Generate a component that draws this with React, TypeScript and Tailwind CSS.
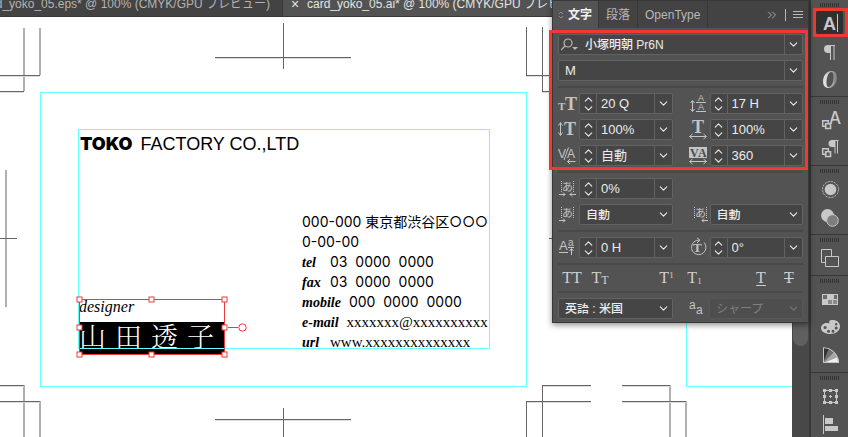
import { useState, type ReactNode } from 'react';
import { ChevronDown, ChevronUp, ChevronsRight, Menu } from 'lucide-react';

const SANS = "font-['Liberation_Sans','Noto_Sans_CJK_JP',sans-serif]";
const FIELD = 'h-[21px] rounded-xs border border-[#626262] bg-[#454545] text-[#ececec]';

/* ---------- character panel glyphs ---------- */

function Glyph({ children }: { children: ReactNode }) {
  return (
    <svg width="21" height="21" viewBox="0 0 21 21" fill="#c4c4c4" stroke="none" className="shrink-0">
      {children}
    </svg>
  );
}

function T({ x, y, size, children, serif = true, bold = true, fill }: any) {
  return (
    <text
      x={x}
      y={y}
      fontSize={size}
      fill={fill}
      fontWeight={bold ? 700 : 400}
      fontFamily={serif ? 'Liberation Serif, serif' : 'Liberation Sans, Noto Sans CJK JP, sans-serif'}
    >
      {children}
    </text>
  );
}

function Line({ d }: { d: string }) {
  return <path d={d} fill="none" stroke="#c4c4c4" strokeWidth="1" />;
}

function Mojikumi({ x = 3 }: { x?: number }) {
  return (
    <g>
      <path d={`M${x + 0.5} 3v11M${x + 12.5} 3v11`} stroke="#c4c4c4" strokeDasharray="1 1" />
      <T x={x + 1} y={13} size={11} serif={false} bold={false}>あ</T>
    </g>
  );
}

const glyphs: Record<string, ReactNode> = {
  size: <><T x={0} y={17} size={11}>T</T><T x={7} y={17} size={18}>T</T></>,
  leading: (
    <>
      <Line d="M3.500 8v10M1.500 10l2-2.500 2 2.500M1.500 16l2 2.500 2-2.500M7 9.500h10M7 18.500h10" />
      <T x={9} y={8} size={9} serif={false} bold={false}>A</T>
      <T x={9} y={17} size={9} serif={false} bold={false}>A</T>
    </>
  ),
  vscale: <><Line d="M2.500 4v12M.5 6.500l2-3 2 3M.5 13.500l2 3 2-3" /><T x={6} y={16} size={18}>T</T></>,
  hscale: <><T x={3} y={14} size={18}>T</T><Line d="M1 17.500h16M3.500 15l-3 2.500 3 2.500M14.500 15l3 2.500-3 2.500" /></>,
  kerning: (
    <>
      <T x={0} y={13} size={12} serif={false} bold={false}>V</T>
      <T x={9} y={13} size={12} serif={false} bold={false}>A</T>
      <Line d="M10.500 2.500l-4.500 12.500M9.500 16.500h8M12 14l-2.500 2.500 2.500 2.500" />
    </>
  ),
  tracking: (
    <>
      <path d="M0 2h18v11H0z" />
      <T x={1} y={12} size={12} fill="#4a4a4a">V</T>
      <T x={9} y={12} size={12} fill="#4a4a4a">A</T>
      <Line d="M1 16.500h16M3.500 14l-3 2.500 3 2.500M14.500 14l3 2.500-3 2.500" />
    </>
  ),
  tsume: <><Mojikumi /><Line d="M1 16.500h6M5 14.500l2 2-2 2M18 16.500h-6M14 14.500l-2 2 2 2" /></>,
  akiLeft: <><Mojikumi /><Line d="M1 16.500h6M5 14.500l2 2-2 2" /></>,
  akiRight: <><Mojikumi x={5} /><Line d="M19 16.500h-6M15 14.500l-2 2 2 2" /></>,
  baseline: (
    <>
      <T x={1} y={13} size={13} serif={false} bold={false}>A</T>
      <T x={10} y={9} size={10} serif={false} bold={false}>a</T>
      <Line d="M1 15.500h9M10 10.500h6M13.500 18v-6M11.500 14l2-2.500 2 2.500" />
    </>
  ),
  rotation: (
    <>
      <Line d="M11 3.300A7.200 7.200 0 1 0 15 5.500M8 .8l3 2.500-3 2.500" />
      <T x={4} y={15} size={13}>T</T>
    </>
  ),
  antialias: (
    <>
      <T x={1} y={11} size={12} serif={false} bold={false}>a</T>
      <T x={8} y={16} size={12} serif={false} bold={false}>a</T>
    </>
  ),
};

/* ---------- character panel controls ---------- */

function Stepper({ id, icon, label, value }: { id: string; icon: string; label: string; value: string }) {
  return (
    <div className="flex items-center justify-between">
      <label htmlFor={id} title={label}><Glyph>{glyphs[icon]}</Glyph></label>
      <div className={`${FIELD} flex w-[94px]`}>
        <div className="flex w-[17px] flex-col items-center justify-center border-r border-[#626262]">
          <button aria-label={`${label} +`} className="flex h-[9px] items-center"><ChevronUp size={13} /></button>
          <button aria-label={`${label} -`} className="flex h-[9px] items-center"><ChevronDown size={13} /></button>
        </div>
        <input id={id} aria-label={label} defaultValue={value} className="w-0 flex-1 bg-transparent pl-1 text-[13px] leading-5 outline-none" />
        <button aria-label={`${label} ▾`} className="flex w-[18px] items-center justify-center border-l border-[#626262]">
          <ChevronDown size={13} />
        </button>
      </div>
    </div>
  );
}

function Dropdown({ id, label, value, disabled = false, wide = false }: { id: string; label: string; value: string; disabled?: boolean; wide?: boolean }) {
  return (
    <div className={`grid items-center ${wide ? 'w-[115px]' : 'w-[94px]'}`}>
      <select
        id={id}
        aria-label={label}
        disabled={disabled}
        className={`col-start-1 row-start-1 h-[21px] w-full appearance-none rounded-xs border pl-1.5 text-[12px] leading-none ${
          disabled ? 'border-[#575757] bg-[#4e4e4e] text-[#808080] opacity-100' : 'border-[#626262] bg-[#454545] font-medium text-[#ececec]'
        }`}
      >
        <option>{value}</option>
      </select>
      <ChevronDown size={13} className={`pointer-events-none col-start-1 row-start-1 mr-[3px] justify-self-end ${disabled ? 'text-[#777777]' : 'text-[#ececec]'}`} />
    </div>
  );
}

function Rule() {
  return <hr className="h-[2px] border-0 bg-[#494949]" />;
}

const caseButton = 'flex h-5 w-7 items-center justify-center font-[Liberation_Serif,serif] text-[16px] leading-none text-[#d0d0d0]';

function CharacterPanel() {
  const [tab, setTab] = useState('文字');

  return (
    <section className="absolute top-0 right-0 z-20 w-[257px] border border-[#383838] bg-[#535353] shadow-[0_2px_6px_rgba(0,0,0,0.45)]">
      <div className="flex h-[27px] bg-[#434343] text-[12px] text-[#b8b8b8]">
        {['文字', '段落', 'OpenType'].map((name) => (
          <button
            key={name}
            onClick={() => setTab(name)}
            className={`flex items-center gap-1 border-r border-[#383838] ${
              tab === name ? 'bg-[#535353] pr-1.5 pl-[5px] font-bold text-[#f0f0f0]' : 'px-[7px]'
            }`}
          >
            {tab === name && (
              <svg width="6" height="8" viewBox="0 0 6 8" fill="none" stroke="#8c8c8c"><path d="M1 3l2-2 2 2M1 5l2 2 2-2" /></svg>
            )}
            {name}
          </button>
        ))}
        <div className="ml-auto flex items-center gap-1.5 pr-1">
          <button aria-label="折りたたむ"><ChevronsRight size={14} strokeWidth={1.5} /></button>
          <span className="h-3 w-px bg-[#b8b8b8]" />
          <button aria-label="パネルメニュー">
            <svg width="12" height="9" viewBox="0 0 12 9" stroke="#b8b8b8"><path d="M1 1.500h10M1 4.500h10M1 7.500h10" /></svg>
          </button>
        </div>
      </div>

      <div className="flex flex-col gap-[5px] px-[5px] pt-[6px] pb-[3px]">
        <div className={`${FIELD} flex`}>
          <label htmlFor="family" title="フォント" className="flex items-center pl-0.5">
            <svg width="18" height="14" viewBox="0 0 18 14" fill="none" stroke="#b8b8b8" strokeWidth="1.200">
              <circle cx="7" cy="5" r="4" />
              <path d="M4 8l-4 4" />
              <path d="M11 9h6l-3 3z" fill="#b8b8b8" stroke="none" />
            </svg>
          </label>
          <input id="family" aria-label="フォント" defaultValue="小塚明朝 Pr6N" className="w-0 flex-1 bg-transparent pl-[6px] text-[12px] font-medium outline-none" />
          <button aria-label="フォント一覧" className="flex w-[18px] items-center justify-center border-l border-[#626262]"><ChevronDown size={13} /></button>
        </div>
        <div className={`${FIELD} flex`}>
          <input aria-label="スタイル" defaultValue="M" className="w-0 flex-1 bg-transparent pl-[6px] text-[13px] outline-none" />
          <button aria-label="スタイル一覧" className="flex w-[18px] items-center justify-center border-l border-[#626262]"><ChevronDown size={13} /></button>
        </div>
        <Rule />
        <div className="grid grid-cols-2 gap-x-4 gap-y-[5px]">
          <Stepper id="size" icon="size" label="フォントサイズ" value="20 Q" />
          <Stepper id="leading" icon="leading" label="行送り" value="17 H" />
          <Stepper id="vscale" icon="vscale" label="垂直比率" value="100%" />
          <Stepper id="hscale" icon="hscale" label="水平比率" value="100%" />
          <Stepper id="kerning" icon="kerning" label="カーニング" value="自動" />
          <Stepper id="tracking" icon="tracking" label="トラッキング" value="360" />
        </div>
        <Rule />
        <div className="grid grid-cols-2 gap-x-4 gap-y-[5px]">
          <Stepper id="tsume" icon="tsume" label="文字ツメ" value="0%" />
          <span />
          <div className="flex items-center justify-between">
            <label htmlFor="akiLeft"><Glyph>{glyphs.akiLeft}</Glyph></label>
            <Dropdown id="akiLeft" label="アキ左" value="自動" />
          </div>
          <div className="flex items-center justify-between">
            <label htmlFor="akiRight"><Glyph>{glyphs.akiRight}</Glyph></label>
            <Dropdown id="akiRight" label="アキ右" value="自動" />
          </div>
        </div>
        <Rule />
        <div className="grid grid-cols-2 gap-x-4">
          <Stepper id="baseline" icon="baseline" label="ベースラインシフト" value="0 H" />
          <Stepper id="rotation" icon="rotation" label="文字回転" value="0°" />
        </div>
        <Rule />
        <div className="-my-0.5 flex justify-between">
          <div className="flex">
            <button className={caseButton}>TT</button>
            <button className={caseButton}>T<span className="pt-[3px] text-[12px]">T</span></button>
          </div>
          <div className="flex">
            <button className={caseButton}>T<span className="pb-1.5 text-[9px]">1</span></button>
            <button className={caseButton}>T<span className="pt-1.5 text-[9px]">1</span></button>
          </div>
          <div className="flex">
            <button className={`${caseButton} underline underline-offset-2`}>T</button>
            <button className={`${caseButton} line-through`}>T</button>
          </div>
        </div>
        <Rule />
        <div className="flex justify-between">
          <Dropdown id="language" label="言語" value="英語 : 米国" wide />
          <div className="flex">
            <label htmlFor="antialias"><Glyph>{glyphs.antialias}</Glyph></label>
            <Dropdown id="antialias" label="アンチエイリアス" value="シャープ" disabled />
          </div>
        </div>
      </div>

      {/* callout round the font settings */}
      <div className="pointer-events-none absolute top-[29px] -left-1 h-[140px] w-[259px] border-[3px] border-[#ee3a32]" />
    </section>
  );
}

/* ---------- icon dock ---------- */

function Pilcrow() {
  return <path d="M19.500 7v1H19v14h-1V8h-2.500v14h-1v-7H12.500a4 4 0 0 1 0-8z" />;
}

const StyleSquares = () => (
  <g>
    <path d="M6.700 13.700h5.600v5.600H6.700z" fill="none" stroke="#c8c8c8" strokeWidth="1.400" />
    <path d="M9.700 16.700h4.800v4.800H9.700z" fill="#535353" stroke="#c8c8c8" strokeWidth="1.600" />
  </g>
);

const dockGroups: { name: string; icon: ReactNode }[][] = [
  [
    {
      name: '文字',
      icon: (
        <>
          <rect x="0" y="1" width="27" height="23" rx="2" fill="#303030" />
          <T x={7} y={20} size={18} serif={false}>A</T>
          <path d="M21 4h1v18h-1z" />
        </>
      ),
    },
    { name: '段落', icon: <g transform="translate(-.500)"><Pilcrow /></g> },
    {
      name: 'OpenType',
      icon: (
        <>
          <defs>
            <linearGradient id="ot">
              <stop offset="0.2" stopColor="#dddddd" />
              <stop offset="1" stopColor="#7a7a7a" />
            </linearGradient>
          </defs>
          <path fill="url(#ot)" fillRule="evenodd" d="M15.500 5c3.600 0 5.500 2.700 5.500 6.300C21 17 17.500 22 12.600 22 9 22 7 19.300 7 15.700 7 10 10.600 5 15.500 5zm-.2.9c-3 0-4.800 5.800-4.800 10.600 0 2.600.7 4.500 2.300 4.500 3 0 4.800-5.800 4.800-10.600 0-2.600-.7-4.500-2.300-4.500z" />
        </>
      ),
    },
  ],
  [
    { name: '文字スタイル', icon: <><text x="13" y="17" fontSize="17" fontWeight="500" fontFamily="Inter, sans-serif">A</text><StyleSquares /></> },
    { name: '段落スタイル', icon: <><path d="M22.500 5v1H22v12.500h-1V6h-1.500v12.500h-1V12H16a3.500 3.500 0 0 1 0-7z" /><StyleSquares /></> },
  ],
  [
    {
      name: 'アピアランス',
      icon: <><circle cx="14.500" cy="13.500" r="5.800" /><circle cx="14.500" cy="13.500" r="8" fill="none" stroke="#c8c8c8" strokeDasharray="2 1.140" /></>,
    },
    {
      name: '透明',
      icon: <><circle cx="11.500" cy="11.500" r="6.500" /><circle cx="16.500" cy="16.500" r="5.800" fill="#7e7e7e" stroke="#c8c8c8" /></>,
    },
  ],
  [
    {
      name: 'アートボード',
      icon: <g fill="#535353" stroke="#c8c8c8"><path d="M5.500 4.500h10v13h-10z" /><path d="M9.500 11.500h13v10h-13z" /></g>,
    },
  ],
  [
    {
      name: 'スウォッチ',
      icon: (
        <>
          <path d="M6 8h16v11H6z" />
          <path d="M7 9h4v4H7zM18 9h3v4h-3z" fill="#6a6a6a" />
          <path d="M12 14h4v4h-4zM17 14h4v4h-4z" fill="#8a8a8a" />
        </>
      ),
    },
    {
      name: 'カラー',
      icon: (
        <path
          fillRule="evenodd"
          d="M5 14c0-3 3-5 6-5 1.500 0 2 .5 2.500 0S12 7.500 14 6.500C19 5 24 8 24 12.500c0 4-4 7.500-10 7.500-5 0-9-2.500-9-6zm2.500-.5a1.600 1.600 0 1 0 3.200 0 1.600 1.600 0 0 0-3.200 0zm3.500 3.700a1.500 1.500 0 1 0 3 0 1.500 1.500 0 0 0-3 0zm4.500 0a1.500 1.500 0 1 0 3 0 1.500 1.500 0 0 0-3 0zm3.200-3.200a1.500 1.500 0 1 0 3 0 1.500 1.500 0 0 0-3 0zm.3-3.800a1.200 1.200 0 1 0 2.400 0 1.200 1.200 0 0 0-2.400 0z"
        />
      ),
    },
    {
      name: 'カラーガイド',
      icon: (
        <>
          <path d="M7 21V5A16 16 0 0 1 13.100 6.200z" fill="#333333" />
          <path d="M7 21l6.100-14.800a16 16 0 0 1 5.200 3.500z" fill="#707070" />
          <path d="M7 21L18.300 9.700a16 16 0 0 1 3.500 5.200z" fill="#a6a6a6" />
          <path d="M7 21l14.800-6.100A16 16 0 0 1 23 21z" fill="#eeeeee" />
          <path d="M7.500 20.500v-15A15.500 15.500 0 0 1 22.500 20.500z" fill="none" stroke="#c8c8c8" />
        </>
      ),
    },
  ],
  [
    {
      name: '変形',
      icon: (
        <>
          <path d="M8.500 7.500h12v12h-12z" fill="none" stroke="#c8c8c8" />
          <path d="M7 6h3v3H7zM13 6h3v3h-3zM19 6h3v3h-3zM7 12h3v3H7zM19 12h3v3h-3zM7 18h3v3H7zM13 18h3v3h-3zM19 18h3v3h-3z" />
          <path d="M14 12h1v1h1v1h-1v1h-1v-1h-1v-1h1z" />
        </>
      ),
    },
    { name: '整列', icon: <path d="M7 4h1v19H7zM9 7h8v6H9zM9 15h13v5H9z" /> },
  ],
];

function Dock() {
  return (
    <aside className="relative w-[39px] shrink-0 overflow-hidden border-l-2 border-[#383838] bg-[#535353]">
      {dockGroups.map((group, i) => (
        <div key={i} className="flex flex-col items-center border-b border-[#383838] pt-[3px] pb-[2px]">
          <svg width="19" height="4" className="mb-[3px]" aria-hidden>
            <path d="M0 2h19" stroke="#333333" strokeWidth="4" strokeDasharray="1 1" />
          </svg>
          {group.map((item) => (
            <button key={item.name} aria-label={item.name} title={item.name} className="h-7">
              <svg width="27" height="28" viewBox="0 0 27 28" fill="#c8c8c8">{item.icon}</svg>
            </button>
          ))}
        </div>
      ))}
      <div className="pointer-events-none absolute top-2 right-0 h-[29px] w-[35px] border-[3px] border-[#ee3a32]" />
    </aside>
  );
}

/* ---------- artboard ---------- */

// crop marks and the neighbouring artboard's guide
function CropMarks() {
  return (
    <svg className="absolute inset-0 h-full w-full" fill="none" shapeRendering="crispEdges">
      <path stroke="#b0b0b0" strokeWidth="2" d="M24 11v63M40 11v47M6 153v137M24 368v60M40 384v60M670 368v60M686 384v60" />
      <path
        stroke="#dddddd"
        d="M0 59.500h40M0 75.500h24M215 41.500h136M215 403.500h136M0 369.500h24M0 385.500h40M526 59.500h30M542 75.500h20M542 369.500h49M526 385.500h65M622 369.500h48M622 385.500h64"
      />
      <path
        stroke="#666666"
        d="M0 58.500h40M0 74.500h24M215 40.500h136M283.500 6v46M0 221.500h17M549 221.500h17M215 402.500h136M283.500 391v50M0 368.500h24M0 384.500h40M526.500 10v48.500h30M542.500 10v64.500h20M591 368.500h-48.500v60M591 384.500h-64.500v60M622 368.500h48M622 384.500h64"
      />
      <path stroke="#66ffff" d="M686.500 80v289.500h130" />
    </svg>
  );
}

function Selection() {
  const handles = [[0, 0], [72, 0], [145, 0], [0, 28], [145, 28], [0, 55], [72, 55], [145, 55]];
  return (
    <svg width="176" height="64" viewBox="-4 -4 176 64" fill="none" stroke="#ee3a3a" className="absolute -top-1 -left-1 z-10">
      <path d="M.5.500h145v55H.500zM149 28.500h10" />
      <circle cx="163.500" cy="28.500" r="3.700" />
      {handles.map(([x, y]) => (
        <rect key={`${x}-${y}`} x={x - 2} y={y - 2} width="5" height="5" fill="#ffffff" />
      ))}
    </svg>
  );
}

const contacts = [
  { label: 'tel', value: '03  0000  0000', sans: true },
  { label: 'fax', value: '03  0000  0000', sans: true },
  { label: 'mobile', value: '000  0000  0000', sans: true },
  { label: 'e-mail', value: 'xxxxxxx@xxxxxxxxxx', sans: false },
  { label: 'url', value: 'www.xxxxxxxxxxxxxx', sans: false },
];

function BusinessCard() {
  return (
    <article className="absolute top-[75px] left-[40px] h-[295px] w-[487px] border border-[#66ffff] pt-[36px] pl-[37px] text-black">
      <div className="relative flex h-[220px] w-[412px] flex-col justify-between">
        <h1 className="flex items-baseline gap-2 pt-[5px] pl-[2px] text-[18px] leading-5">
          <span className="font-[Inter,sans-serif] font-black">TOKO</span>
          <span>FACTORY CO.,LTD</span>
        </h1>

        <div className="-mb-[6px] flex items-end justify-between pl-px">
          <div className="relative h-[56px] w-[146px]">
            <p className="h-[23px] font-[Liberation_Serif,serif] text-[16px] leading-4 italic">designer</p>
            <p className="flex h-[33px] gap-[9px] overflow-hidden bg-black font-['Noto_Serif_CJK_JP','Noto_Sans_CJK_JP',serif] text-[27px] leading-[27px] font-light text-white">
              {['山', '田', '透', '子'].map((c) => <span key={c}>{c}</span>)}
            </p>
            <Selection />
          </div>

          <address className="mb-[3px] w-[188px] whitespace-pre text-[14px] leading-5 not-italic font-[Inter,'Noto_Sans_CJK_JP',sans-serif]">
            <p>000-000 東京都渋谷区○○○</p>
            <p>0-00-00</p>
            {contacts.map((c) => (
              <p key={c.label} className="flex h-5 items-baseline gap-2">
                <span className="min-w-5 font-[Liberation_Serif,serif] font-bold italic">{c.label}</span>
                <span className={c.sans ? '' : 'font-[Liberation_Serif,serif] text-[15px]'}>{c.value}</span>
              </p>
            ))}
          </address>
        </div>

        <div className="pointer-events-none absolute inset-0 border border-[#66ffff]" />
      </div>
    </article>
  );
}

export default function App() {
  return (
    <div className={`flex h-screen overflow-hidden bg-[#535353] ${SANS}`}>
      <div className="relative flex min-w-0 flex-1 flex-col">
        <nav className="flex h-[17px] shrink-0 overflow-hidden border-b border-[#383838] bg-[#434343] text-[12px] leading-[9px] whitespace-nowrap">
          <button className="flex w-[283px] shrink-0 justify-end border-r border-[#383838] pr-3 text-[#b4b4b4]">
            card_yoko_05.eps* @ 100% (CMYK/GPU プレビュー)
          </button>
          <button className="flex flex-1 gap-2 bg-[#535353] pl-2 text-[#e4e4e4]">
            <span className="w-2 text-[14px]">×</span>
            card_yoko_05.ai* @ 100% (CMYK/GPU プレビュー)
          </button>
        </nav>

        <div className="flex min-h-0 flex-1">
          <main className="relative flex-1 overflow-hidden bg-white">
            <CropMarks />
            <BusinessCard />
          </main>
          <div className="flex w-[17px] flex-col bg-[#484848] pt-[120px]">
            <div className="mx-px h-[209px] rounded-full bg-[#606060]" />
          </div>
        </div>

        <CharacterPanel />
      </div>
      <Dock />
    </div>
  );
}
